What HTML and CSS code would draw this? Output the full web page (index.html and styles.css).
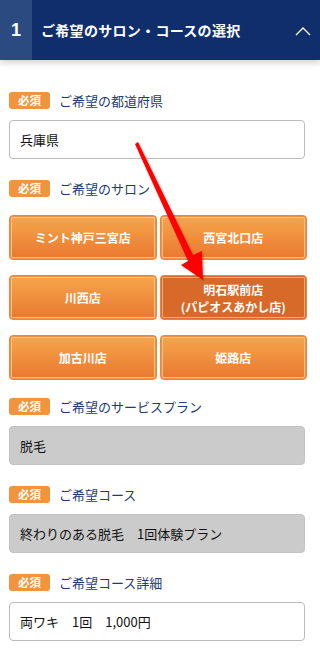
FILE: index.html
```html
<!DOCTYPE html>
<html lang="ja">
<head>
  <meta charset="UTF-8" />
  <meta name="viewport" content="width=device-width, initial-scale=1.0" />
  <title>サロン・コースの選択</title>
  <link rel="stylesheet" href="styles.css">
</head>

<body>
  <header class="step-head">
    <div class="step-num">1</div>
    <div class="step-title">ご希望のサロン・コースの選択</div>
    <svg class="chevron" width="16" height="10" viewBox="0 0 16 10">
      <polyline points="1,9 8,2 15,9" fill="none" stroke="#fff" stroke-width="1.3" />
    </svg>
  </header>

  <main class="form">
    <div class="field field-first">
      <div class="label"><span class="req">必須</span>ご希望の都道府県</div>
      <div class="box">兵庫県</div>
    </div>

    <div class="field">
      <div class="label"><span class="req">必須</span>ご希望のサロン</div>
      <div class="salons">
        <button class="salon">ミント神戸三宮店</button>
        <button class="salon">西宮北口店</button>
        <button class="salon">川西店</button>
        <button class="salon active">明石駅前店<br>(パピオスあかし店)</button>
        <button class="salon">加古川店</button>
        <button class="salon">姫路店</button>
      </div>
    </div>

    <div class="field field-after-grid">
      <div class="label"><span class="req">必須</span>ご希望のサービスプラン</div>
      <div class="box box-locked">脱毛</div>
    </div>

    <div class="field">
      <div class="label"><span class="req">必須</span>ご希望コース</div>
      <div class="box box-locked">終わりのある脱毛　1回体験プラン</div>
    </div>

    <div class="field">
      <div class="label"><span class="req">必須</span>ご希望コース詳細</div>
      <div class="box">両ワキ　1回　1,000円</div>
    </div>
  </main>

  <!-- pointer drawn over the form -->
  <svg class="pointer" width="320" height="648" viewBox="0 0 320 648">
    <defs>
      <filter id="sh" x="-20%" y="-20%" width="140%" height="140%">
        <feDropShadow dx="1" dy="1" stdDeviation="1.2" flood-color="#000" flood-opacity="0.3" />
      </filter>
    </defs>
    <polygon filter="url(#sh)" fill="#ff0000"
      points="135,144 138,142 193,255 202,251 203,280 181,265 188,261" />
  </svg>
</body>
</html>
```

FILE: styles.css
```css
body {
  margin: 0;
  font-family: "Noto Sans CJK JP", "Noto Sans", sans-serif;
  background: #fff;
  color: #222;
  position: relative;
  width: 320px;
  height: 648px;
  overflow: hidden;
}

.step-head {
  display: flex;
  align-items: center;
  height: 60px;
  background: #0f2e6b;
  color: #fff;
  box-shadow: 0 3px 6px rgba(0, 0, 0, 0.18);
}

.step-num {
  width: 32px;
  height: 60px;
  background: #2a4a80;
  display: flex;
  align-items: center;
  justify-content: center;
  font-family: "Liberation Sans", sans-serif;
  font-size: 18px;
  font-weight: bold;
}

.step-title {
  flex: 1;
  padding-left: 9px;
  font-size: 14px;
  font-weight: bold;
  letter-spacing: 0.3px;
}

.chevron {
  margin-right: 9px;
  margin-top: 1px;
}

.form {
  padding: 0 15px 0 9px;
}

.field {
  margin-top: 21px;
}

.field-first {
  margin-top: 32px;
}

.field-after-grid {
  margin-top: 18px;
}

.label {
  display: flex;
  align-items: center;
  height: 17px;
  font-size: 13px;
  color: #1e3a78;
}

.req {
  display: inline-block;
  width: 41px;
  height: 17px;
  line-height: 17px;
  margin-right: 9px;
  border-radius: 3px;
  background: #f0943e;
  color: #fff;
  font-size: 11.5px;
  font-weight: bold;
  text-align: center;
}

.box {
  margin-top: 11px;
  height: 39px;
  box-sizing: border-box;
  border: 1px solid #bcbcbc;
  border-radius: 4px;
  padding: 0 10px;
  display: flex;
  align-items: center;
  font-size: 13px;
  color: #111;
}

.box-locked {
  background: #cbcbcb;
  border-color: #c3c3c3;
}

.salons {
  margin-top: 18px;
  margin-right: -2px;
  display: grid;
  grid-template-columns: 1fr 1fr;
  column-gap: 3px;
  row-gap: 15px;
}

.salon {
  height: 45px;
  padding: 0;
  border: 1px solid #ec8638;
  border-radius: 4px;
  background: linear-gradient(#f6a64c, #e9782f);
  box-shadow: inset 0 0 0 1px #f08f40, inset 0 0 0 2px rgba(255, 215, 170, 0.75);
  color: #fff;
  font-family: inherit;
  font-size: 12px;
  font-weight: bold;
  line-height: 17px;
}

.salon.active {
  background: #d76a29;
  border-color: #e3873e;
  box-shadow: inset 0 0 0 1px #d86c2a, inset 0 0 0 2px rgba(250, 190, 140, 0.8);
}

.pointer {
  position: absolute;
  left: 0;
  top: 0;
  pointer-events: none;
}
```
